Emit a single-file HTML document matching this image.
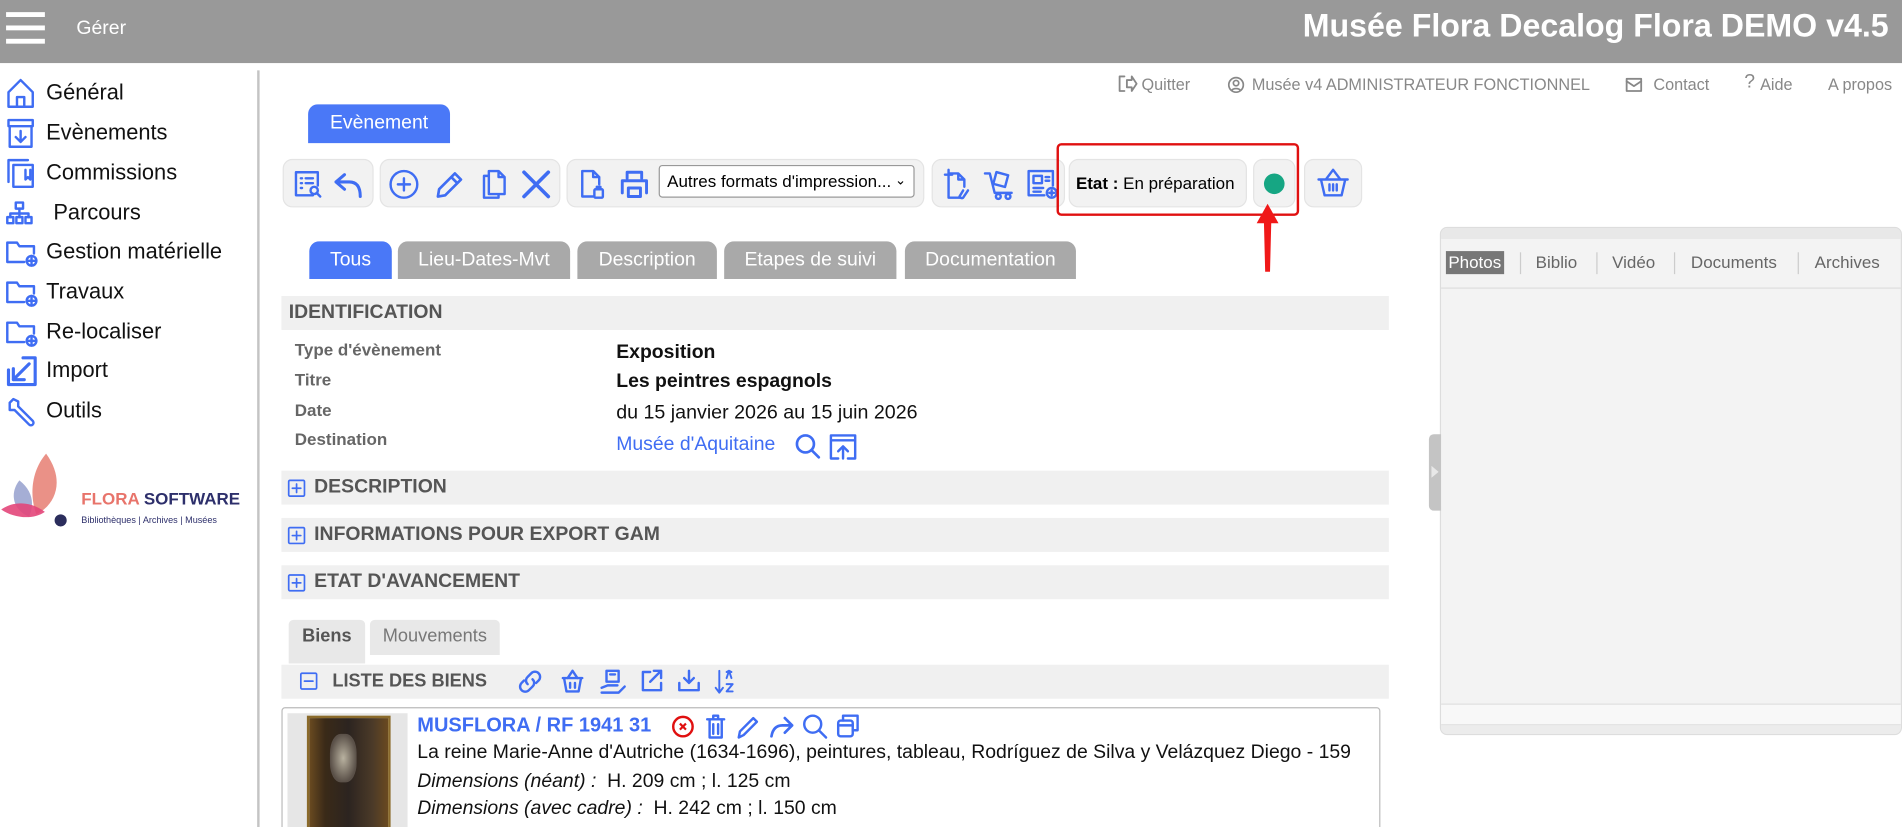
<!DOCTYPE html>
<html><head><meta charset="utf-8"><style>
*{box-sizing:border-box;margin:0;padding:0}
html,body{width:1902px;height:827px;overflow:hidden;background:#fff}
#w{position:absolute;left:0;top:0;width:1568px;height:682px;transform:scale(1.21301);transform-origin:0 0;font-family:"Liberation Sans",sans-serif;overflow:hidden}
.a{position:absolute}
.t{position:absolute;white-space:nowrap}
svg.i{position:absolute;fill:none;stroke:#3f6df3;stroke-width:2;stroke-linecap:round;stroke-linejoin:round}
.grp{position:absolute;background:#f2f2f2;border:1px solid #e4e4e4;border-radius:8px;top:131px;height:40px}
.tab{position:absolute;top:199px;height:31px;border-radius:8px 8px 0 0;background:#a9a9a9;color:#fff;font-size:16px;text-align:center;line-height:31px}
.bar{position:absolute;left:232px;width:913px;height:28px;background:#f0f0f0;color:#555;font-weight:bold;font-size:16px;line-height:28px}
.lbl{position:absolute;left:243px;font-size:14px;font-weight:bold;color:#666}
.val{position:absolute;left:508px;font-size:16px;color:#111}
.menu{position:absolute;left:38px;font-size:18px;color:#111}
.lk{position:absolute;top:62px;font-size:13.4px;color:#888}
</style></head><body><div id="w">

<!-- header -->
<div class="a" style="left:0;top:0;width:1568px;height:52px;background:#999"></div>
<div class="a" style="left:5px;top:10px;width:32px;height:4px;background:#fff"></div>
<div class="a" style="left:5px;top:21px;width:32px;height:4px;background:#fff"></div>
<div class="a" style="left:5px;top:32px;width:32px;height:4px;background:#fff"></div>
<div class="t" style="left:63px;top:15px;font-size:16px;color:#fff">Gérer</div>
<div class="t" style="right:11px;top:6px;font-size:26.5px;font-weight:bold;color:#fff">Musée Flora Decalog Flora DEMO v4.5</div>

<!-- sidebar -->
<div class="a" style="left:212px;top:58px;width:2px;height:624px;background:#c4c4c4"></div>
<svg class="i" style="left:5px;top:64px" width="24" height="26" viewBox="0 0 24 26"><path d="M2 12L12 2l10 10v12H2z M9 24v-8h6v8"/></svg>
<div class="menu" style="top:66px">Général</div>
<svg class="i" style="left:5px;top:97px" width="24" height="26" viewBox="0 0 24 26"><rect x="2" y="2" width="20" height="5"/><path d="M3 7v17h18V7 M12 11v9 M8 16l4 4 4-4"/></svg>
<div class="menu" style="top:99px">Evènements</div>
<svg class="i" style="left:5px;top:130px" width="24" height="26" viewBox="0 0 24 26"><rect x="6" y="6" width="16" height="18"/><path d="M2 20V2h16"/><path d="M16 10v8l2-2 2 2v-8"/></svg>
<div class="menu" style="top:132px">Commissions</div>
<svg class="i" style="left:4px;top:165px" width="24" height="22" viewBox="0 0 24 22"><rect x="9" y="2" width="6" height="5"/><rect x="2" y="14" width="5" height="5"/><rect x="9.5" y="14" width="5" height="5"/><rect x="17" y="14" width="5" height="5"/><path d="M12 7v7 M4.5 14v-3h15v3"/></svg>
<div class="menu" style="top:165px;left:44px">Parcours</div>
<svg class="i" style="left:4px;top:196px" width="28" height="24" viewBox="0 0 28 24"><path d="M2 4h8l2 3h12v6 M2 4v16h14"/><circle cx="22" cy="19" r="4"/><path d="M18 19h8 M22 15v8"/></svg>
<div class="menu" style="top:197px">Gestion matérielle</div>
<svg class="i" style="left:4px;top:229px" width="28" height="24" viewBox="0 0 28 24"><path d="M2 4h8l2 3h12v6 M2 4v16h14"/><circle cx="22" cy="19" r="4"/><path d="M18 19h8 M22 15v8"/></svg>
<div class="menu" style="top:230px">Travaux</div>
<svg class="i" style="left:4px;top:262px" width="28" height="24" viewBox="0 0 28 24"><path d="M2 4h8l2 3h12v6 M2 4v16h14"/><circle cx="22" cy="19" r="4"/><path d="M18 19h8 M22 15v8"/></svg>
<div class="menu" style="top:263px">Re-localiser</div>
<svg class="i" style="left:5px;top:293px;stroke-width:2.6" width="26" height="26" viewBox="0 0 26 26"><path d="M14 2h10v22H2V12 M19 7L6 20 M6 11v9h9"/></svg>
<div class="menu" style="top:295px">Import</div>
<svg class="i" style="left:5px;top:326px" width="26" height="26" viewBox="0 0 26 26"><path d="M3 6l3-3 4 2 0 4 12 12a2 2 0 0 1-3 3L7 12H3z"/></svg>
<div class="menu" style="top:328px">Outils</div>

<!-- logo -->
<svg class="a" style="left:0;top:372px" width="62" height="64" viewBox="0 0 62 64"><path d="M38 2C26 16 24 36 30 52 46 44 54 24 38 2z" fill="#e8857a" opacity=".9"/><path d="M16 24c-8 10-6 24 8 30 5-12 2-22-8-30z" fill="#8e9acb" opacity=".8"/><path d="M1 48c10 7 26 9 36 2-12-9-26-9-36-2z" fill="#e3467a" opacity=".9"/><circle cx="50" cy="57" r="5" fill="#2b2d5c"/></svg>
<div class="t" style="left:67px;top:403px;font-size:14px;font-weight:bold"><span style="color:#e8746b">FLORA</span> <span style="color:#2d2f6b">SOFTWARE</span></div>
<div class="t" style="left:67px;top:424px;font-size:7.5px;color:#2d2f6b">Bibliothèques | Archives | Musées</div>

<!-- top links -->
<svg class="i" style="left:922px;top:62px;stroke:#888;stroke-width:1.5" width="16" height="14" viewBox="0 0 16 14"><path d="M5 1H1v12h4 M7 4h4V1l4 6-4 6V10H7z"/></svg>
<div class="lk" style="left:941px">Quitter</div>
<svg class="i" style="left:1012px;top:63px;stroke:#888;stroke-width:1.4" width="14" height="14" viewBox="0 0 14 14"><circle cx="7" cy="7" r="6"/><circle cx="7" cy="5.5" r="2.2"/><path d="M3.5 11.5c1-2 6-2 7 0"/></svg>
<div class="lk" style="left:1032px">Musée v4 ADMINISTRATEUR FONCTIONNEL</div>
<svg class="i" style="left:1340px;top:64px;stroke:#888;stroke-width:1.5" width="14" height="12" viewBox="0 0 14 12"><rect x="1" y="1" width="12" height="10"/><path d="M1 3l6 4 6-4"/></svg>
<div class="lk" style="left:1363px">Contact</div>
<div class="lk" style="left:1438px;top:59px;font-size:16px">?</div>
<div class="lk" style="left:1451px">Aide</div>
<div class="lk" style="left:1507px">A propos</div>

<!-- evenement tab -->
<div class="a" style="left:254px;top:86px;width:117px;height:32px;background:#4a78f7;border-radius:8px 8px 0 0;color:#fff;font-size:16px;text-align:center;line-height:32px">Evènement</div>

<!-- toolbar -->
<div class="grp" style="left:233px;width:75px"></div>
<svg class="i" style="left:241px;top:139px" width="26" height="26" viewBox="0 0 26 26"><path d="M17 22H3V3h18v11"/><path d="M7 8h1 M11 8h6 M7 12h1 M11 12h6 M7 16h1"/><circle cx="18" cy="18" r="3"/><path d="M20 20l3 3"/></svg>
<svg class="i" style="left:274px;top:138px;stroke-width:2.5" width="28" height="28" viewBox="0 0 28 28"><path d="M10 6L3 12l7 6 M3 12h11c6 0 9 4 9 12"/></svg>
<div class="grp" style="left:313px;width:149px"></div>
<svg class="i" style="left:320px;top:139px" width="26" height="26" viewBox="0 0 26 26"><circle cx="13" cy="13" r="11"/><path d="M13 8v10 M8 13h10"/></svg>
<svg class="i" style="left:358px;top:139px;stroke-width:2.2" width="26" height="26" viewBox="0 0 26 26"><path d="M3 23l1-6L17 4l5 5L9 22z M14 7l5 5"/></svg>
<svg class="i" style="left:395px;top:138px" width="24" height="28" viewBox="0 0 24 28"><path d="M8 3h8l5 5v14H8z M16 3v5h5 M8 7H4v18h12v-3"/></svg>
<svg class="i" style="left:429px;top:139px;stroke-width:3" width="26" height="26" viewBox="0 0 26 26"><path d="M3 3l20 20 M23 3L3 23"/></svg>
<div class="grp" style="left:467px;width:295px"></div>
<svg class="i" style="left:476px;top:138px" width="24" height="28" viewBox="0 0 24 28"><path d="M13 24H4V3h9l5 5v6 M13 3v5h5"/><rect x="14" y="18" width="7" height="7" rx="1"/><path d="M16 18v-2h3v2"/></svg>
<svg class="i" style="left:509px;top:139px;stroke-width:2.4" width="28" height="26" viewBox="0 0 28 26"><path d="M8 8V3h12v5 M4 20V10h20v10 M9 16h10v7H9z"/></svg>
<div class="a" style="left:543px;top:136px;width:211px;height:27px;background:#fff;border:1px solid #999;border-radius:3px;font-size:14px;line-height:25px;padding-left:6px;color:#000">Autres formats d'impression...<span style="position:absolute;right:6px;font-size:11px">&#8964;</span></div>
<div class="grp" style="left:768px;width:110px"></div>
<svg class="i" style="left:776px;top:137px" width="26" height="30" viewBox="0 0 26 30"><path d="M6 6v20h10 M6 6h8l5 5v6 M14 6v5h5 M3 7h6 M6 3v6"/><path d="M18 20l-3 5a2 2 0 0 0 3 1l4-6"/></svg>
<svg class="i" style="left:810px;top:137px" width="28" height="30" viewBox="0 0 28 30"><path d="M2 6h4l4 16h14"/><rect x="10" y="6" width="10" height="10" transform="rotate(15 15 11)"/><circle cx="13" cy="25" r="2"/><circle cx="21" cy="25" r="2"/></svg>
<svg class="i" style="left:845px;top:137px" width="28" height="30" viewBox="0 0 28 30"><path d="M16 24H3V4h20v12"/><rect x="7" y="8" width="7" height="6"/><path d="M17 9h3 M17 12h3 M7 18h8 M7 21h6"/><circle cx="22" cy="22" r="4"/><path d="M22 20v4 M20 22h4"/></svg>
<div class="grp" style="left:881px;width:147px;z-index:1"></div>
<div class="t" style="left:887px;top:143px;font-size:14px;z-index:2"><b>Etat :</b> En préparation</div>
<div class="grp" style="left:1033px;width:35px;z-index:1"></div>
<div class="a" style="left:1042px;top:143px;width:17px;height:17px;border-radius:50%;background:#16a683;z-index:2"></div>
<div class="a" style="left:871px;top:118px;width:200px;height:60px;border:2px solid #e01010;border-radius:4px;z-index:3"></div>
<div class="grp" style="left:1075px;width:48px"></div>
<svg class="i" style="left:1085px;top:137px" width="28" height="28" viewBox="0 0 28 28"><path d="M8 11l6-8 6 8 M2 11h24 M4 11l3 13h14l3-13 M11 15v5 M14 15v5 M17 15v5"/></svg>
<svg class="a" style="left:1032px;top:168px;z-index:4" width="26" height="58" viewBox="0 0 26 58"><path d="M13 0L4 16h6l1 40h4l1-40h6z" fill="#f01818"/></svg>

<!-- tabs -->
<div class="tab" style="left:255px;width:68px;background:#4a78f7">Tous</div>
<div class="tab" style="left:328px;width:142px">Lieu-Dates-Mvt</div>
<div class="tab" style="left:476px;width:115px">Description</div>
<div class="tab" style="left:597px;width:142px">Etapes de suivi</div>
<div class="tab" style="left:746px;width:141px">Documentation</div>

<!-- identification -->
<div class="bar" style="top:244px;padding-left:6px">IDENTIFICATION</div>
<div class="lbl" style="top:280px">Type d'évènement</div>
<div class="lbl" style="top:305px">Titre</div>
<div class="lbl" style="top:330px">Date</div>
<div class="lbl" style="top:354px">Destination</div>
<div class="val" style="top:282px;font-weight:bold">Exposition</div>
<div class="val" style="top:306px;font-weight:bold">Les peintres espagnols</div>
<div class="val" style="top:331px;font-size:16.2px">du 15 janvier 2026 au 15 juin 2026</div>
<div class="val" style="top:358px;color:#3f6df3">Musée d'Aquitaine</div>
<svg class="i" style="left:655px;top:357px;stroke-width:2.2" width="22" height="22" viewBox="0 0 22 22"><circle cx="9" cy="9" r="7"/><path d="M14 14l6 6"/></svg>
<svg class="i" style="left:683px;top:356px" width="24" height="24" viewBox="0 0 24 24"><path d="M8 22H2V3h20v19h-6 M2 7h20 M12 22V12 M8 16l4-4 4 4"/></svg>

<div class="bar" style="top:388px;padding-left:27px">DESCRIPTION</div>
<div class="bar" style="top:427px;padding-left:27px">INFORMATIONS POUR EXPORT GAM</div>
<div class="bar" style="top:466px;padding-left:27px">ETAT D'AVANCEMENT</div>
<svg class="i" style="left:237px;top:395px;stroke-width:1.4" width="15" height="15" viewBox="0 0 15 15"><rect x="1" y="1" width="13" height="13" rx="1"/><path d="M7.5 4v7 M4 7.5h7"/></svg>
<svg class="i" style="left:237px;top:434px;stroke-width:1.4" width="15" height="15" viewBox="0 0 15 15"><rect x="1" y="1" width="13" height="13" rx="1"/><path d="M7.5 4v7 M4 7.5h7"/></svg>
<svg class="i" style="left:237px;top:473px;stroke-width:1.4" width="15" height="15" viewBox="0 0 15 15"><rect x="1" y="1" width="13" height="13" rx="1"/><path d="M7.5 4v7 M4 7.5h7"/></svg>

<!-- biens -->
<div class="a" style="left:238px;top:511px;width:63px;height:36px;background:#e8e8e8;border-radius:4px 4px 0 0;font-size:15px;font-weight:bold;color:#555;text-align:center;line-height:28px">Biens</div>
<div class="a" style="left:305px;top:511px;width:107px;height:29px;background:#e8e8e8;border-radius:4px 4px 0 0;font-size:15px;color:#777;text-align:center;line-height:28px">Mouvements</div>
<div class="bar" style="top:548px;padding-left:42px;font-size:15px">LISTE DES BIENS</div>
<svg class="i" style="left:247px;top:554px;stroke-width:1.4" width="15" height="15" viewBox="0 0 15 15"><rect x="1" y="1" width="13" height="13" rx="1"/><path d="M4 7.5h7"/></svg>
<svg class="i" style="left:427px;top:552px" width="20" height="20" viewBox="0 0 20 20"><path d="M8 12a4 4 0 0 1 0-6l3-3a4 4 0 0 1 6 6l-2 2 M12 8a4 4 0 0 1 0 6l-3 3a4 4 0 0 1-6-6l2-2"/></svg>
<svg class="i" style="left:462px;top:551px" width="20" height="22" viewBox="0 0 20 22"><path d="M6 8l4-6 4 6 M2 8h16 M3 8l2 11h10l2-11 M8 12v4 M12 12v4"/></svg>
<svg class="i" style="left:494px;top:551px" width="22" height="22" viewBox="0 0 22 22"><rect x="6" y="2" width="10" height="9"/><path d="M2 16l5-2h8 M2 20h14l5-5 M9 5h4"/></svg>
<svg class="i" style="left:527px;top:551px" width="20" height="20" viewBox="0 0 20 20"><path d="M9 3H3v15h15v-6 M12 2h6v6 M18 2L9 11"/></svg>
<svg class="i" style="left:558px;top:551px" width="20" height="20" viewBox="0 0 20 20"><path d="M10 2v10 M6 8l4 4 4-4 M2 12v6h16v-6"/></svg>
<svg class="i" style="left:588px;top:551px;stroke-width:1.6" width="20" height="22" viewBox="0 0 20 22"><path d="M5 2v18 M2 16l3 4 3-4 M11 3l2-1 2 1 M11 8l2-6 2 6 M11 13h5l-5 6h5"/></svg>

<!-- card -->
<div class="a" style="left:232px;top:583px;width:906px;height:110px;border:1px solid #bbb;border-radius:3px"></div>
<div class="a" style="left:237px;top:588px;width:99px;height:100px;background:#e6e6e6"></div>
<div class="a" style="left:253px;top:590px;width:69px;height:95px;background:linear-gradient(90deg,#6a4a20,#3a2a18 20%,#2c2420 50%,#4b3a28 80%,#6a4a20);border:2px solid #8a6a2a"></div>
<div class="a" style="left:272px;top:605px;width:22px;height:40px;background:radial-gradient(#b9b2a0,#5a5048 70%);border-radius:40%"></div>
<div class="t" style="left:344px;top:589px;font-size:16.5px;font-weight:bold;color:#3f6df3">MUSFLORA / RF 1941 31</div>
<svg class="a" style="left:553px;top:589px" width="20" height="20" viewBox="0 0 20 20"><circle cx="10" cy="10" r="8" fill="none" stroke="#e01010" stroke-width="2"/><path d="M7.5 7.5l5 5 M12.5 7.5l-5 5" stroke="#e01010" stroke-width="1.8"/></svg>
<svg class="i" style="left:580px;top:588px" width="20" height="22" viewBox="0 0 20 22"><path d="M3 5h14 M8 5V2h4v3 M5 5v15h10V5 M8 9v8 M12 9v8"/></svg>
<svg class="i" style="left:606px;top:588px" width="22" height="22" viewBox="0 0 22 22"><path d="M3 20l1-5L15 4l3 3L7 18z"/></svg>
<svg class="i" style="left:633px;top:588px;stroke-width:2.2" width="22" height="22" viewBox="0 0 22 22"><path d="M14 4l6 6-6 6 M20 10h-8c-5 0-8 3-9 9"/></svg>
<svg class="i" style="left:661px;top:588px" width="22" height="22" viewBox="0 0 22 22"><circle cx="9" cy="9" r="7"/><path d="M14 14l6 6"/></svg>
<svg class="i" style="left:688px;top:587px" width="22" height="22" viewBox="0 0 22 22"><rect x="3" y="7" width="12" height="13" rx="2"/><path d="M7 7V3h12v12h-4 M3 11h12"/></svg>
<div class="a" style="left:344px;top:612px;width:792px;height:20px;overflow:hidden"><div class="t" style="left:0;top:0;font-size:16px;color:#111">La reine Marie-Anne d'Autriche (1634-1696), peintures, tableau, Rodríguez de Silva y Velázquez Diego - 159</div></div>
<div class="t" style="left:344px;top:636px;font-size:16px;color:#111"><i>Dimensions (néant) :</i>&nbsp; H. 209 cm ; l. 125 cm</div>
<div class="t" style="left:344px;top:658px;font-size:16px;color:#111"><i>Dimensions (avec cadre) :</i>&nbsp; H. 242 cm ; l. 150 cm</div>

<!-- right panel -->
<div class="a" style="left:1187px;top:187px;width:381px;height:419px;background:#f3f3f3;border:1px solid #ddd;border-radius:6px;overflow:hidden">
  <div class="a" style="left:0;top:0;width:381px;height:9px;background:#e8e8e8"></div>
  <div class="a" style="left:0;top:49px;width:381px;height:1px;background:#ddd"></div>
  <div class="a" style="left:0;top:392px;width:381px;height:18px;background:#f8f8f8;border-top:1px solid #e0e0e0;border-bottom:1px solid #e0e0e0"></div>
  <div class="a" style="left:0;top:410px;width:381px;height:10px;background:#ececec"></div>
</div>
<div class="t" style="left:1192px;top:207px;height:19px;padding:0 2px;background:#777;color:#fff;font-size:14px;line-height:19px">Photos</div>
<div class="a" style="left:1253px;top:208px;width:1px;height:18px;background:#ccc"></div>
<div class="t" style="left:1266px;top:208px;font-size:14px;color:#666">Biblio</div>
<div class="a" style="left:1316px;top:208px;width:1px;height:18px;background:#ccc"></div>
<div class="t" style="left:1329px;top:208px;font-size:14px;color:#666">Vidéo</div>
<div class="a" style="left:1380px;top:208px;width:1px;height:18px;background:#ccc"></div>
<div class="t" style="left:1394px;top:208px;font-size:14px;color:#666">Documents</div>
<div class="a" style="left:1482px;top:208px;width:1px;height:18px;background:#ccc"></div>
<div class="t" style="left:1496px;top:208px;font-size:14px;color:#666">Archives</div>
<div class="a" style="left:1178px;top:358px;width:10px;height:63px;background:#c4c4c4;border-radius:4px 0 0 4px"></div>
<svg class="a" style="left:1180px;top:384px" width="6" height="10" viewBox="0 0 6 10"><path d="M0 0l6 5-6 5z" fill="#e8e8e8"/></svg>

</div></body></html>
